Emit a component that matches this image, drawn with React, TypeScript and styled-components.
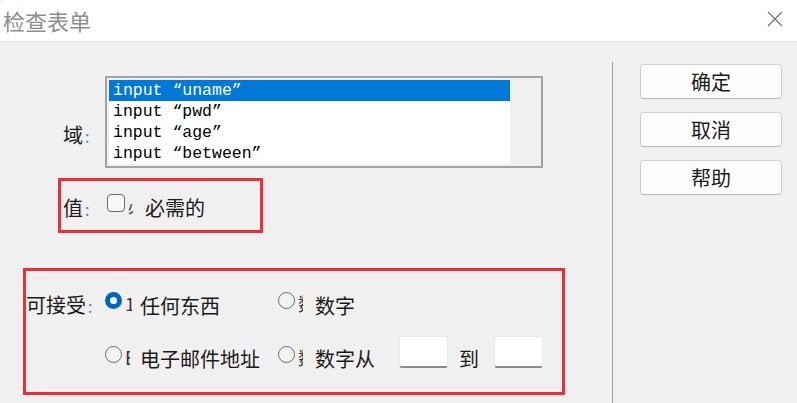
import React from "react";
import styled, { createGlobalStyle } from "styled-components";

const CJK = `"Noto Sans CJK SC", "Noto Sans", sans-serif`;

const GlobalStyle = createGlobalStyle`
  html, body {
    margin: 0;
    padding: 0;
    background: #f0f0f0;
    overflow: hidden;
  }
  * {
    box-sizing: border-box;
  }
`;

const fields = [`input “uname”`, `input “pwd”`, `input “age”`, `input “between”`];

const App = () => {
  return (
    <Window>
      <GlobalStyle />
      <TitleBar>
        <Title>检查表单</Title>
        <CloseButton aria-label="close">
          <svg width="16" height="16" viewBox="0 0 16 16">
            <path d="M1 1 L15 15 M15 1 L1 15" stroke="#707070" strokeWidth="1.2" fill="none" />
          </svg>
        </CloseButton>
      </TitleBar>

      <Body>
        <MainPane>
          <FieldRow>
            <FieldLabel $width={42}>
              域<Colon>:</Colon>
            </FieldLabel>
            <ListBox>
              <ListItems>
                {fields.map((f, i) => (
                  <ListItem key={f} $selected={i === 0}>
                    {f}
                  </ListItem>
                ))}
              </ListItems>
              <ScrollTrack />
            </ListBox>
          </FieldRow>

          <ValueBox>
            <FieldLabel $width={44}>
              值<Colon>:</Colon>
            </FieldLabel>
            <Choice>
              <CheckBox />
              <ClipChar>必</ClipChar>
              <ChoiceText $gap={12}>必需的</ChoiceText>
            </Choice>
          </ValueBox>

          <AcceptBox>
            <FieldLabel>
              可接受<Colon>:</Colon>
            </FieldLabel>
            <Choice>
              <Radio $checked />
              <ClipChar $width={7}>1</ClipChar>
              <ChoiceText $gap={8}>任何东西</ChoiceText>
            </Choice>
            <Choice>
              <Radio />
              <ClipChar>数</ClipChar>
              <ChoiceText $gap={12}>数字</ChoiceText>
            </Choice>

            <span />
            <Choice>
              <Radio />
              <ClipChar>E</ClipChar>
              <ChoiceText $gap={10}>电子邮件地址</ChoiceText>
            </Choice>
            <Choice>
              <Radio />
              <ClipChar>数</ClipChar>
              <ChoiceText $gap={12}>数字从</ChoiceText>
              <NumberInput $gap={24} />
              <ChoiceText $gap={11}>到</ChoiceText>
              <NumberInput $gap={15} />
            </Choice>
          </AcceptBox>
        </MainPane>

        <Divider />

        <ButtonColumn>
          <DialogButton>确定</DialogButton>
          <DialogButton>取消</DialogButton>
          <DialogButton>帮助</DialogButton>
        </ButtonColumn>
      </Body>
    </Window>
  );
};

// Styled components

const Window = styled.div`
  width: 797px;
  height: 403px;
  display: flex;
  flex-direction: column;
  background: #f0f0f0;
  font-family: ${CJK};
  color: #1a1a1a;
`;

const TitleBar = styled.div`
  height: 42px;
  flex: 0 0 42px;
  background: #ffffff;
  border-bottom: 1px solid #e6e6e6;
  border-top-left-radius: 6px;
  display: flex;
  align-items: center;
  justify-content: space-between;
  padding: 0 14px 0 3px;
`;

const Title = styled.div`
  font-size: 22px;
  line-height: 28px;
  color: #8e8e8e;
  margin-top: -2px;
`;

const CloseButton = styled.div`
  display: flex;
  align-items: center;
  justify-content: center;
  width: 16px;
  height: 16px;
  margin-top: -3px;
`;

const Body = styled.div`
  flex: 1;
  display: flex;
  min-height: 0;
`;

const MainPane = styled.div`
  width: 612px;
  flex: 0 0 612px;
  display: flex;
  flex-direction: column;
  align-items: flex-start;
`;

const FieldRow = styled.div`
  display: flex;
  align-items: flex-end;
  margin: 34px 0 0 63px;
`;

const FieldLabel = styled.div<{ $width?: number }>`
  font-size: 20px;
  line-height: 24px;
  padding-top: 5px;
  white-space: nowrap;
  ${(p) => (p.$width ? `width: ${p.$width}px; flex: 0 0 ${p.$width}px;` : "")}

  ${FieldRow} & {
    padding-top: 0;
    margin-bottom: 20px;
  }
`;

const Colon = styled.span`
  font-size: 16px;
  color: #6f7f96;
  margin-left: 2px;
`;

const ListBox = styled.div`
  width: 438px;
  height: 92px;
  border: 2px solid #a3a3a3;
  padding: 2px;
  display: flex;
  background: #f0f0f0;
`;

const ListItems = styled.div`
  flex: 0 0 401px;
  background: #ffffff;
`;

const ListItem = styled.div<{ $selected?: boolean }>`
  height: 21px;
  line-height: 21px;
  padding-left: 4px;
  font-family: "Liberation Mono", "DejaVu Sans Mono", monospace;
  font-size: 16.5px;
  white-space: pre;
  color: ${(p) => (p.$selected ? "#ffffff" : "#000000")};
  background: ${(p) => (p.$selected ? "#0078d7" : "transparent")};
`;

const ScrollTrack = styled.div`
  flex: 1;
  background: #f0f0f0;
`;

const RedBox = styled.div`
  border: 3px solid #e8303a;
`;

const ValueBox = styled(RedBox)`
  margin: 10px 0 0 58px;
  width: 205px;
  height: 55px;
  padding-left: 2px;
  display: flex;
  align-items: center;
`;

const AcceptBox = styled(RedBox)`
  margin: 35px 0 0 23px;
  width: 542px;
  height: 127px;
  padding: 17px 0 0 0;
  display: grid;
  grid-template-columns: 79px 173px 1fr;
  grid-auto-rows: auto;
  row-gap: 18px;
  align-items: center;
  align-content: start;
`;

const Choice = styled.div`
  display: flex;
  align-items: center;
`;

const ChoiceText = styled.span<{ $gap?: number }>`
  font-size: 20px;
  line-height: 24px;
  padding-top: 5px;
  margin-left: ${(p) => p.$gap ?? 0}px;
  white-space: nowrap;
  color: #1a1a1a;
`;

const ClipChar = styled.span<{ $width?: number }>`
  display: inline-block;
  width: ${(p) => p.$width ?? 5}px;
  overflow: hidden;
  margin-left: 3px;
  font-size: 18px;
  line-height: 22px;
  color: #333;
`;

const CheckBox = styled.span`
  display: inline-block;
  width: 18px;
  height: 18px;
  flex: 0 0 18px;
  border: 1.5px solid #6a6a6a;
  border-radius: 4px;
  background: #f7f7f7;
  margin-bottom: 5px;
`;

const Radio = styled.span<{ $checked?: boolean }>`
  display: inline-block;
  width: 17px;
  height: 17px;
  flex: 0 0 17px;
  border-radius: 50%;
  margin-bottom: 5px;
  border: ${(p) => (p.$checked ? "5px solid #0067c0" : "1.5px solid #6a6a6a")};
  background: ${(p) => (p.$checked ? "#ffffff" : "#f3f3f3")};
`;

const NumberInput = styled.span<{ $gap?: number }>`
  display: inline-block;
  width: 49px;
  height: 32px;
  flex: 0 0 49px;
  margin-left: ${(p) => p.$gap ?? 0}px;
  margin-bottom: 9px;
  background: #ffffff;
  border: 1px solid #e8e8e8;
  border-bottom: 2px solid #8a8a8a;
  border-radius: 3px;
`;

const Divider = styled.div`
  width: 1px;
  flex: 0 0 1px;
  margin-top: 20px;
  background: #a0a0a0;
`;

const ButtonColumn = styled.div`
  display: flex;
  flex-direction: column;
  gap: 13px;
  padding: 22px 0 0 27px;
`;

const DialogButton = styled.button`
  width: 142px;
  height: 35px;
  background: #fdfdfd;
  border: 1px solid #d0d0d0;
  border-bottom-color: #b8b8b8;
  border-radius: 4px;
  font-family: ${CJK};
  font-size: 20px;
  line-height: 24px;
  color: #1a1a1a;
  padding: 0;
  display: flex;
  align-items: center;
  justify-content: center;
`;

export default App;
